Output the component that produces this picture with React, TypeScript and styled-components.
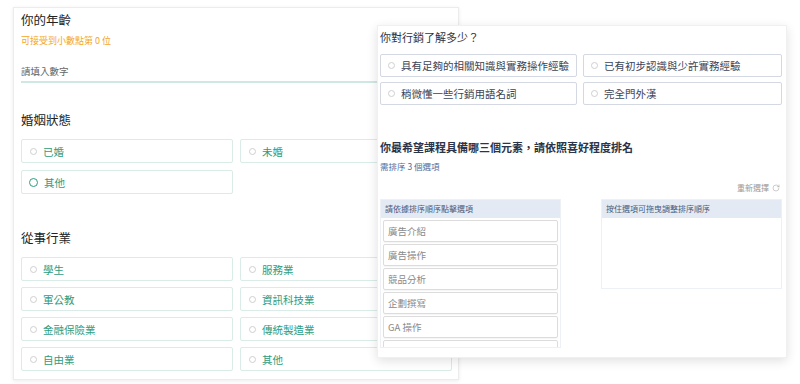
import React from "react";
import styled, {createGlobalStyle} from "styled-components";
import {RotateCw} from "lucide-react";

const Global = createGlobalStyle`
    body {
        margin: 0;
        background: #fff;
        font-family: "Noto Sans CJK TC", "Noto Sans", "Liberation Sans", sans-serif;
    }
`

const marriage = ['已婚', '未婚', '其他'];
const jobs = ['學生', '服務業', '軍公教', '資訊科技業', '金融保險業', '傳統製造業', '自由業', '其他'];
const know = ['具有足夠的相關知識與實務操作經驗', '已有初步認識與少許實務經驗', '稍微懂一些行銷用語名詞', '完全門外漢'];
const elements = ['廣告介紹', '廣告操作', '競品分析', '企劃撰寫', 'GA 操作', 'GA 報表'];

const Stage = styled.div`
    position: relative;
    width: 800px;
    height: 384px;
    overflow: hidden;
`

const BackPanel = styled.div`
    box-sizing: border-box;
    width: 446px;
    height: 373px;
    margin: 7px 0 0 13px;
    padding: 2px 6px 0 7px;
    border: 1px solid #ececec;
    background: #fff;
    box-shadow: 0 1px 4px rgba(0, 0, 0, 0.08);
`

const Title = styled.div<{ $mt?: number }>`
    margin-top: ${p => p.$mt ?? 0}px;
    font-size: 12.5px;
    line-height: 20px;
    color: #222;
`

const Hint = styled.div`
    margin-top: 4px;
    font-size: 9px;
    line-height: 14px;
    color: #f5a623;
`

const NumberInput = styled.div`
    margin-top: 13px;
    height: 20px;
    width: 360px;
    border-bottom: 2px solid #cfe8e3;
    font-size: 9.5px;
    line-height: 20px;
    color: #666;
`

const OptGrid = styled.div<{ $mt: number; $gap: number }>`
    display: grid;
    grid-template-columns: 212px 212px;
    column-gap: 7px;
    row-gap: ${p => p.$gap}px;
    margin-top: ${p => p.$mt}px;
`

const Opt = styled.div`
    box-sizing: border-box;
    height: 24px;
    display: flex;
    align-items: center;
    gap: 6px;
    padding-left: 8px;
    border: 1px solid #d9ece8;
    border-radius: 2px;
    font-size: 10.5px;
    color: #2e9c7e;
`

const Radio = styled.span<{ $on?: boolean }>`
    box-sizing: border-box;
    width: ${p => p.$on ? 9 : 7}px;
    height: ${p => p.$on ? 9 : 7}px;
    margin-left: ${p => p.$on ? -1 : 0}px;
    border-radius: 50%;
    border: ${p => p.$on ? '1.5px solid #2e9c7e' : '1px solid #cfcfcf'};
    flex-shrink: 0;
`

const FrontCard = styled.div`
    position: absolute;
    left: 377px;
    top: 25px;
    box-sizing: border-box;
    width: 410px;
    height: 333px;
    padding: 2px 4px 0 2px;
    background: #fff;
    border: 1px solid #f0f0f0;
    box-shadow: 0 3px 10px rgba(0, 0, 0, 0.12);
`

const Question = styled.div<{ $mt?: number; $bold?: boolean }>`
    margin-top: ${p => p.$mt ?? 0}px;
    font-size: 11px;
    line-height: 18px;
    font-weight: ${p => p.$bold ? 700 : 400};
    color: #2b3448;
`

const ChoiceGrid = styled.div`
    display: grid;
    grid-template-columns: 197px 199px;
    column-gap: 6px;
    row-gap: 5px;
    margin-top: 8px;
`

const Choice = styled.div`
    box-sizing: border-box;
    height: 23px;
    display: flex;
    align-items: center;
    gap: 6px;
    padding-left: 7px;
    border: 1px solid #d3d8e3;
    border-radius: 2px;
    font-size: 10.5px;
    color: #3a4457;
`

const SubNote = styled.div`
    margin-top: 4px;
    font-size: 8.5px;
    line-height: 12px;
    color: #4f6e9f;
`

const ResetRow = styled.div`
    margin-top: 10px;
    padding-right: 2px;
    display: flex;
    justify-content: flex-end;
    align-items: center;
    gap: 3px;
    font-size: 8px;
    line-height: 12px;
    color: #9a9a9a;
`

const Columns = styled.div`
    margin-top: 5px;
    display: flex;
    justify-content: space-between;
`

const Col = styled.div<{ $h: number }>`
    box-sizing: border-box;
    width: 181px;
    height: ${p => p.$h}px;
    border: 1px solid #edf0f4;
    overflow: hidden;
`

const ColHead = styled.div`
    height: 18px;
    padding-left: 4px;
    background: #e4eaf3;
    font-size: 8px;
    line-height: 18px;
    color: #4a5b7c;
`

const ItemList = styled.div`
    display: flex;
    flex-direction: column;
    gap: 2px;
    padding: 2px 2px 0;
`

const Item = styled.div`
    box-sizing: border-box;
    height: 22px;
    flex-shrink: 0;
    padding-left: 4px;
    border: 1px solid #dcdcdc;
    border-radius: 2px;
    box-shadow: 0 1px 1px rgba(0, 0, 0, 0.04);
    font-size: 9.5px;
    line-height: 20px;
    color: #8a8a8a;
`

const App = () => {
    return <Stage>
        <Global/>
        <BackPanel>
            <Title>你的年齡</Title>
            <Hint>可接受到小數點第 0 位</Hint>
            <NumberInput>請填入數字</NumberInput>

            <Title $mt={27}>婚姻狀態</Title>
            <OptGrid $mt={9} $gap={7}>
                {marriage.map((m, i) => <Opt key={m}><Radio $on={i == 2}/>{m}</Opt>)}
            </OptGrid>

            <Title $mt={34}>從事行業</Title>
            <OptGrid $mt={9} $gap={6}>
                {jobs.map(j => <Opt key={j}><Radio/>{j}</Opt>)}
            </OptGrid>
        </BackPanel>

        <FrontCard>
            <Question>你對行銷了解多少？</Question>
            <ChoiceGrid>
                {know.map(k => <Choice key={k}><Radio/>{k}</Choice>)}
            </ChoiceGrid>

            <Question $mt={33} $bold>你最希望課程具備哪三個元素，請依照喜好程度排名</Question>
            <SubNote>需排序 3 個選項</SubNote>
            <ResetRow>重新選擇 <RotateCw size={8} strokeWidth={1.5}/></ResetRow>

            <Columns>
                <Col $h={149}>
                    <ColHead>請依據排序順序點擊選項</ColHead>
                    <ItemList>
                        {elements.map(e => <Item key={e}>{e}</Item>)}
                    </ItemList>
                </Col>
                <Col $h={90}>
                    <ColHead>按住選項可拖曳調整排序順序</ColHead>
                </Col>
            </Columns>
        </FrontCard>
    </Stage>
};

export default App;
